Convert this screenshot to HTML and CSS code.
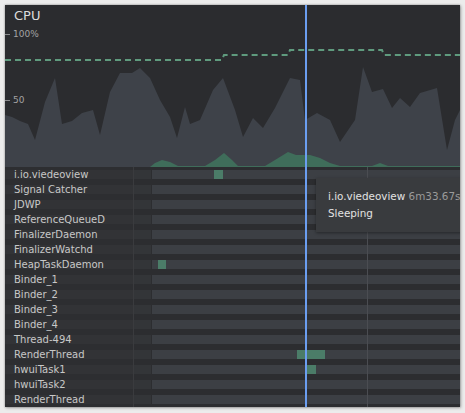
FILE: index.html
```html
<!DOCTYPE html>
<html>
<head>
<meta charset="utf-8">
<link rel="stylesheet" href="styles.css">
</head>
<body>
<div class="panel">
  <div class="chart">
    <svg class="chart-svg" width="455" height="162" viewBox="5 5 455 162">
      <polygon class="cpu-area" points="5,167 5,115 12,117 20,121 28,124 35,140 45,102 55,78 62,124 72,121 82,113 93,110 100,135 110,92 120,73 132,73 140,68 150,78 160,100 170,117 177,138 185,107 190,124 200,120 213,90 223,78 235,110 243,137 253,118 263,128 275,108 290,78 300,80 305,120 317,113 330,120 340,142 355,120 363,67 372,92 383,89 392,108 400,98 410,107 420,93 437,88 447,150 455,120 460,110 460,167"/>
      <polygon class="cpu-green" points="5,167 150,167 155,163 162,160 170,162 178,166 205,166 215,160 224,153 232,160 238,166 265,166 275,160 288,152 296,155 310,155 320,158 330,163 340,166 372,166 380,163 388,166 460,166 460,167"/>
      <path class="cpu-dash" d="M5 60 H222 L224 55 H288 L290 50 H382 L384 55 H460"/>
      <path class="tick" d="M5 34.5 H10 M5 100.5 H10"/>
    </svg>
    <div class="title">CPU</div>
    <div class="axis axis-100">100%</div>
    <div class="axis axis-50">50</div>
  </div>
  <div class="threads">
    <div class="row"><div class="label">i.io.viedeoview</div><div class="track"><div class="band"><span class="slice" style="left:80px;width:9px"></span></div></div></div>
    <div class="row"><div class="label">Signal Catcher</div><div class="track"><div class="band"></div></div></div>
    <div class="row"><div class="label">JDWP</div><div class="track"><div class="band"></div></div></div>
    <div class="row"><div class="label">ReferenceQueueD</div><div class="track"><div class="band"></div></div></div>
    <div class="row"><div class="label">FinalizerDaemon</div><div class="track"><div class="band"></div></div></div>
    <div class="row"><div class="label">FinalizerWatchd</div><div class="track"><div class="band"></div></div></div>
    <div class="row"><div class="label">HeapTaskDaemon</div><div class="track"><div class="band"><span class="slice" style="left:24px;width:8px"></span></div></div></div>
    <div class="row"><div class="label">Binder_1</div><div class="track"><div class="band"></div></div></div>
    <div class="row"><div class="label">Binder_2</div><div class="track"><div class="band"></div></div></div>
    <div class="row"><div class="label">Binder_3</div><div class="track"><div class="band"></div></div></div>
    <div class="row"><div class="label">Binder_4</div><div class="track"><div class="band"></div></div></div>
    <div class="row"><div class="label">Thread-494</div><div class="track"><div class="band"></div></div></div>
    <div class="row"><div class="label">RenderThread</div><div class="track"><div class="band"><span class="slice" style="left:163px;width:28px"></span></div></div></div>
    <div class="row"><div class="label">hwuiTask1</div><div class="track"><div class="band"><span class="slice" style="left:172px;width:10px"></span></div></div></div>
    <div class="row"><div class="label">hwuiTask2</div><div class="track"><div class="band"></div></div></div>
    <div class="row"><div class="label">RenderThread</div><div class="track"><div class="band"></div></div></div>
    <div class="gridline"></div>
  </div>
  <div class="cursor"></div>
  <div class="tooltip">
    <div class="tip-line"><span class="tip-name">i.io.viedeoview</span> <span class="tip-time">6m33.67s</span></div>
    <div class="tip-line">Sleeping</div>
  </div>
</div>
</body>
</html>
```

FILE: styles.css
```css
html, body {
  margin: 0;
  padding: 0;
}
body {
  background: #ececec;
  width: 465px;
  height: 413px;
  font-family: "DejaVu Sans", "Liberation Sans", sans-serif;
}
.panel {
  position: relative;
  margin: 5px 0 0 5px;
  width: 455px;
  height: 402px;
  background: #2b2c2f;
  overflow: hidden;
  box-shadow: 0 0 2px rgba(0, 0, 0, 0.35), 1px 1px 3px rgba(0, 0, 0, 0.25);
  display: flex;
  flex-direction: column;
}
.chart {
  position: relative;
  height: 162px;
  flex: none;
}
.chart-svg {
  display: block;
}
.cpu-area {
  fill: #3e4249;
}
.cpu-green {
  fill: #3f6d5a;
}
.cpu-dash {
  fill: none;
  stroke: #5f9b7e;
  stroke-width: 2;
  stroke-dasharray: 6 4;
}
.tick {
  stroke: #8a8b8d;
  stroke-width: 1;
}
.title {
  position: absolute;
  left: 9px;
  top: 3px;
  font-size: 13px;
  color: #dcdcdc;
  line-height: 16px;
}
.axis {
  position: absolute;
  left: 8px;
  font-size: 9px;
  line-height: 12px;
  color: #a3a3a3;
}
.axis-100 {
  top: 23px;
}
.axis-50 {
  top: 89px;
}
.threads {
  position: relative;
  flex: 1;
  display: flex;
  flex-direction: column;
}
.row {
  display: flex;
  height: 15px;
}
.label {
  width: 129px;
  flex: none;
  padding-left: 9px;
  box-sizing: border-box;
  border-right: 1px solid #3a3b3e;
  background: linear-gradient(#2d2e31 0 3px, #323336 3px 12px, #2d2e31 12px);
  color: #c8c8c8;
  font-size: 10px;
  line-height: 15px;
  white-space: nowrap;
  overflow: hidden;
}
.track {
  flex: 1;
  padding: 3px 0;
  box-sizing: border-box;
  background: #2c2d30;
}
.band {
  position: relative;
  height: 9px;
  background: linear-gradient(to right, #333538 0 17px, #2c2d30 17px 18px, #3c3f44 18px);
}
.slice {
  position: absolute;
  top: 0;
  height: 9px;
  background: #4b7c68;
}
.gridline {
  position: absolute;
  left: 362px;
  top: 0;
  bottom: 0;
  width: 1px;
  background: #4b4d52;
}
.cursor {
  position: absolute;
  left: 300px;
  top: 0;
  bottom: 0;
  width: 2px;
  background: #6b9ef0;
}
.tooltip {
  position: absolute;
  left: 311px;
  top: 173px;
  width: 160px;
  height: 54px;
  box-sizing: border-box;
  padding: 10px 0 0 12px;
  background: #393b3e;
  box-shadow: 0 1px 3px rgba(0, 0, 0, 0.4);
  font-size: 10.4px;
  line-height: 17px;
  color: #e2e2e2;
  white-space: nowrap;
}
.tip-time {
  color: #9a9a9a;
}
```
